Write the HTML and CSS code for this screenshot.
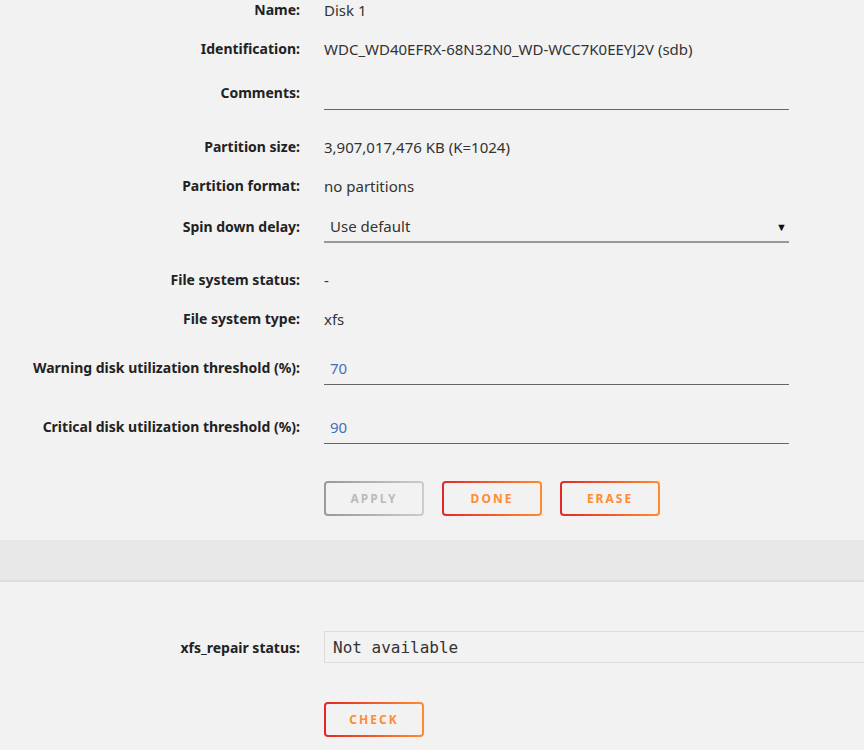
FILE: index.html
```html
<!DOCTYPE html>
<html lang="en">

<head>
  <meta charset="UTF-8">
  <meta name="viewport" content="width=device-width, initial-scale=1.0">
  <title>Disk 1 Settings</title>
  <link rel="stylesheet" href="styles.css">
</head>

<body>
  <form class="disk-form">
    <div class="row">
      <span class="label">Name:</span>
      <span class="value">Disk 1</span>
    </div>
    <div class="row">
      <span class="label">Identification:</span>
      <span class="value">WDC_WD40EFRX-68N32N0_WD-WCC7K0EEYJ2V (sdb)</span>
    </div>
    <div class="row field-row">
      <label class="label" for="comments">Comments:</label>
      <input type="text" id="comments" class="text-input">
    </div>
    <div class="row">
      <span class="label">Partition size:</span>
      <span class="value">3,907,017,476 KB (K=1024)</span>
    </div>
    <div class="row">
      <span class="label">Partition format:</span>
      <span class="value">no partitions</span>
    </div>
    <div class="row select-row">
      <label class="label" for="spindown">Spin down delay:</label>
      <div class="select" id="spindown">
        <span>Use default</span>
        <span class="arrow">&#9660;</span>
      </div>
    </div>
    <div class="row">
      <span class="label">File system status:</span>
      <span class="value">-</span>
    </div>
    <div class="row">
      <span class="label">File system type:</span>
      <span class="value">xfs</span>
    </div>
    <div class="row field-row warning-row">
      <label class="label" for="warning">Warning disk utilization threshold (%):</label>
      <input type="text" id="warning" class="text-input number" value="70">
    </div>
    <div class="row field-row">
      <label class="label" for="critical">Critical disk utilization threshold (%):</label>
      <input type="text" id="critical" class="text-input number" value="90">
    </div>
    <div class="buttons">
      <button type="button" class="btn" disabled>Apply</button>
      <button type="button" class="btn">Done</button>
      <button type="button" class="btn">Erase</button>
    </div>
  </form>

  <div class="band"></div>

  <div class="repair">
    <div class="row repair-row">
      <span class="label">xfs_repair status:</span>
      <div class="status-box">Not available</div>
    </div>
    <div class="buttons check">
      <button type="button" class="btn">Check</button>
    </div>
  </div>
</body>

</html>
```

FILE: styles.css
```css
* {
  box-sizing: border-box;
  margin: 0;
  padding: 0;
}

body {
  font-family: 'Noto Sans', 'Open Sans', sans-serif;
  font-size: 14px;
  color: #333;
  background-color: #f2f2f2;
  overflow: hidden;
}

.disk-form {
  margin-top: -10px;
}

.row {
  display: flex;
  align-items: center;
  height: 39px;
}

.label {
  width: 300px;
  flex-shrink: 0;
  text-align: right;
  font-weight: bold;
  color: #222;
  margin-right: 24px;
}

.value {
  font-size: 15px;
  color: #333;
}

.field-row {
  height: 42px;
  align-items: flex-end;
  margin-bottom: 17px;
}

.field-row .label {
  line-height: 34px;
}

.warning-row {
  margin-top: 5px;
}

.text-input {
  width: 465px;
  height: 34px;
  padding: 0 6px;
  border: none;
  border-bottom: 1px solid #666;
  background: transparent;
  font-family: inherit;
  font-size: 15px;
  color: #333;
  outline: none;
}

.text-input.number {
  color: #486dba;
}

.select-row {
  height: 38px;
  align-items: flex-end;
  margin-bottom: 17px;
}

.select-row .label {
  line-height: 32px;
}

.select {
  width: 465px;
  height: 32px;
  padding: 0 2px 0 6px;
  display: flex;
  align-items: center;
  justify-content: space-between;
  border-bottom: 2px solid #999;
  font-size: 15px;
  color: #333;
}

.select .arrow {
  font-size: 11px;
  color: #111;
}

.buttons {
  display: flex;
  gap: 18px;
  padding: 20px 0 0 324px;
}

.btn {
  width: 100px;
  height: 35px;
  border: 2px solid transparent;
  border-radius: 4px;
  background: linear-gradient(#f2f2f2, #f2f2f2) padding-box,
    linear-gradient(90deg, #e22828, #ff8c2f) border-box;
  color: #ff8c2f;
  font-family: inherit;
  font-size: 12px;
  font-weight: bold;
  letter-spacing: 2px;
  text-transform: uppercase;
  cursor: pointer;
}

.btn:disabled {
  background: linear-gradient(#f2f2f2, #f2f2f2) padding-box,
    linear-gradient(90deg, #999, #ccc) border-box;
  color: #bbb;
  cursor: default;
}

.band {
  margin-top: 24px;
  height: 40px;
  background-color: #e8e8e8;
  border-bottom: 2px solid #dedede;
  box-sizing: content-box;
}

.repair {
  padding-top: 49px;
}

.repair-row {
  height: 32px;
}

.status-box {
  flex: 1;
  min-width: 600px;
  height: 32px;
  padding: 0 8px;
  display: flex;
  align-items: center;
  border: 1px solid #dcdcdc;
  font-family: 'DejaVu Sans Mono', monospace;
  font-size: 16px;
  color: #333;
}

.check {
  padding-top: 39px;
}
```
